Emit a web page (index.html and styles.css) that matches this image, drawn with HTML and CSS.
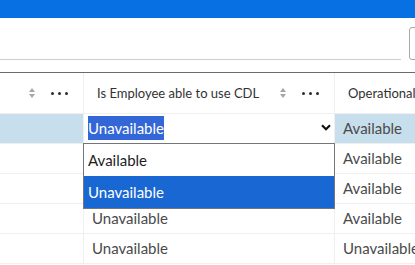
FILE: index.html
```html
<!DOCTYPE html>
<html>
<head>
<meta charset="utf-8">
<link rel="stylesheet" href="styles.css">
</head>
<body>
<div class="topbar"></div>
<div class="toolbar">
  <div class="search"></div>
  <div class="tool-btn"></div>
</div>
<div class="table-wrap">
  <div class="grid">
    <div class="hcell"><span class="hlabel">Employee Name</span><span class="sort"></span><span class="dots"><i></i><i></i><i></i></span></div>
    <div class="hcell"><span class="hlabel">Is Employee able to use CDL</span><span class="sort"></span><span class="dots"><i></i><i></i><i></i></span></div>
    <div class="hcell"><span class="hlabel">Operational Status</span><span class="sort"></span><span class="dots"><i></i><i></i><i></i></span></div>

    <div class="cell sel"></div>
    <div class="cell editing">
      <span class="sel-text">Unavailable</span>
      <svg class="chev" width="10" height="7" viewBox="0 0 10 7"><path d="M1 1.2 L5 5.2 L9 1.2" fill="none" stroke="#111" stroke-width="2.2"/></svg>
    </div>
    <div class="cell sel">Available</div>

    <div class="cell"></div><div class="cell">Available</div><div class="cell">Available</div>
    <div class="cell"></div><div class="cell">Unavailable</div><div class="cell">Available</div>
    <div class="cell"></div><div class="cell">Unavailable</div><div class="cell">Available</div>
    <div class="cell"></div><div class="cell">Unavailable</div><div class="cell">Unavailable</div>
  </div>
  <div class="listbox">
    <div class="opt">Available</div>
    <div class="opt active">Unavailable</div>
  </div>
</div>
</body>
</html>
```
FILE: styles.css
```css
html, body {
  margin: 0;
  padding: 0;
  background: #fff;
  font-family: Lato, "Open Sans", sans-serif;
  overflow: hidden;
}
.topbar {
  height: 18px;
  background: #0770e3;
}
.toolbar {
  display: flex;
  align-items: flex-end;
  padding: 9px 0 12px 0;
  overflow: hidden;
}
.search {
  width: 401px;
  height: 33px;
  flex-shrink: 0;
  box-sizing: border-box;
  border-bottom: 1px solid #cfcfcf;
}
.tool-btn {
  margin-left: 8px;
  width: 34px;
  height: 33px;
  flex-shrink: 0;
  box-sizing: border-box;
  border: 1px solid #a8a8a8;
  border-radius: 3px;
}
.table-wrap {
  position: relative;
  overflow: hidden;
  border-top: 1px solid #6b6b6b;
  height: 200px;
}
.grid {
  display: grid;
  grid-template-columns: 190px 251px 251px;
  grid-template-rows: 41px;
  grid-auto-rows: 30px;
  margin-left: -106px;
  width: 692px;
}
.hcell {
  box-sizing: border-box;
  display: flex;
  align-items: center;
  padding: 0 15px 0 13px;
  border-right: 1px solid #efefef;
  border-bottom: 1px solid #efefef;
  color: #323232;
  font-size: 13px;
  white-space: nowrap;
  overflow: hidden;
}
.hlabel {
  flex: 1;
  overflow: hidden;
}
.sort {
  width: 7px;
  height: 10px;
  margin-right: 15px;
  flex-shrink: 0;
  position: relative;
}
.sort::before, .sort::after {
  content: "";
  position: absolute;
  left: 0;
  border-left: 3.5px solid transparent;
  border-right: 3.5px solid transparent;
}
.sort::before {
  top: 0;
  border-bottom: 4px solid #a6a6a6;
}
.sort::after {
  bottom: 0;
  border-top: 4px solid #a6a6a6;
}
.dots {
  display: flex;
  gap: 4px;
  flex-shrink: 0;
}
.dots i {
  width: 3px;
  height: 3px;
  border-radius: 50%;
  background: #2b2b2b;
}
.cell {
  box-sizing: border-box;
  display: flex;
  align-items: center;
  padding-left: 8px;
  padding-bottom: 2px;
  border-right: 1px solid #efefef;
  border-bottom: 1px solid #efefef;
  color: #4a4a4a;
  font-size: 15px;
  white-space: nowrap;
  overflow: hidden;
}
.cell.sel {
  background: #c7deec;
}
.cell.editing {
  background: #fff;
  padding-left: 4px;
  padding-right: 3px;
  justify-content: space-between;
}
.sel-text {
  background: #3366d6;
  color: #fff;
  line-height: 24px;
}
.chev {
  display: block;
}
.listbox {
  position: absolute;
  left: 83px;
  top: 70px;
  width: 252px;
  box-sizing: border-box;
  border: 1px solid #767676;
  background: #fff;
}
.opt {
  height: 32px;
  display: flex;
  align-items: center;
  padding-left: 4px;
  font-size: 15px;
  color: #1e1e1e;
}
.opt.active {
  background: #1967d2;
  color: #fff;
}
```
